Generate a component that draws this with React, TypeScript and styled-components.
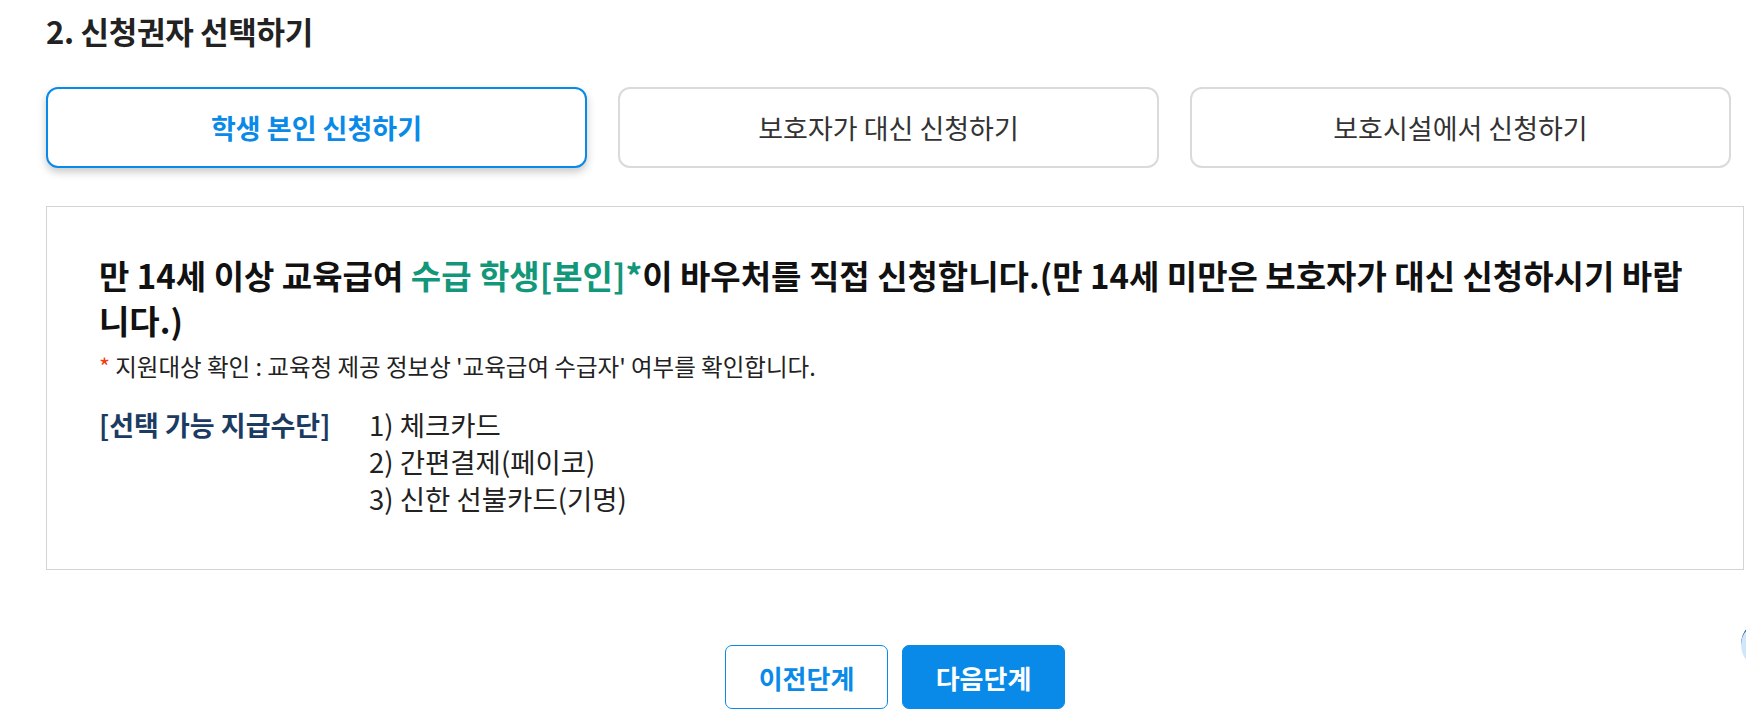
import React, { useState } from "react";
import styled, { createGlobalStyle } from "styled-components";

const GlobalStyle = createGlobalStyle`
  body {
    margin: 0;
    background: #fff;
    font-family: "Noto Sans CJK KR", "Noto Sans", sans-serif;
    overflow: hidden;
  }
`;

const Page = styled.div`
  width: 1698px;
  padding: 12px 0 0 46px;
`;

const Title = styled.h2`
  margin: 0;
  font-size: 31px;
  line-height: 38px;
  font-weight: 700;
  color: #222;
  letter-spacing: -0.3px;
`;

const ChoiceRow = styled.div`
  display: grid;
  grid-template-columns: repeat(3, 541px);
  column-gap: 31px;
  margin-top: 37px;
`;

const ChoiceButton = styled.button<{ $active?: boolean }>`
  height: 81px;
  border-radius: 12px;
  background: #fff;
  font-family: inherit;
  font-size: 27px;
  cursor: pointer;
  border: 2px solid ${({ $active }) => ($active ? "#0a8ae8" : "#dadada")};
  color: ${({ $active }) => ($active ? "#0a8ae8" : "#333")};
  font-weight: ${({ $active }) => ($active ? 700 : 400)};
  box-shadow: ${({ $active }) =>
    $active ? "0 4px 8px rgba(0, 0, 0, 0.22)" : "none"};
`;

const InfoBox = styled.div`
  margin-top: 38px;
  border: 1px solid #d3d3d3;
  padding: 46px 52px 52px;
`;

const Lead = styled.p`
  margin: 0;
  font-size: 33px;
  line-height: 45px;
  font-weight: 700;
  color: #111;
`;

const Green = styled.span`
  color: #13977a;
`;

const Note = styled.p`
  margin: 7px 0 0;
  font-size: 23.5px;
  line-height: 32px;
  color: #222;
`;

const Star = styled.span`
  color: #f23c0c;
`;

const PayRow = styled.div`
  display: flex;
  margin-top: 24px;
`;

const PayLabel = styled.div`
  width: 270px;
  font-size: 27px;
  line-height: 37px;
  font-weight: 700;
  color: #1c3b63;
`;

const PayList = styled.ul`
  margin: 0;
  padding: 0;
  list-style: none;
  font-size: 27.5px;
  line-height: 37px;
  color: #222;
`;

const ActionRow = styled.div`
  display: flex;
  justify-content: center;
  gap: 14px;
  margin-top: 75px;
`;

const ActionButton = styled.button<{ $primary?: boolean }>`
  width: 163px;
  height: 64px;
  border-radius: 7px;
  border: 1px solid #0a8ae8;
  background: ${({ $primary }) => ($primary ? "#0a8ae8" : "#fff")};
  color: ${({ $primary }) => ($primary ? "#fff" : "#0a8ae8")};
  font-family: inherit;
  font-size: 26px;
  font-weight: 700;
  cursor: pointer;
`;

const FloatBadge = styled.div`
  position: fixed;
  left: 1741px;
  top: 620px;
  width: 46px;
  height: 46px;
  border-radius: 50%;
  background: #cfe6fb;
  border-top: 3px solid #1d4f9a;
`;

const choices = ["학생 본인 신청하기", "보호자가 대신 신청하기", "보호시설에서 신청하기"];
const payments = ["1) 체크카드", "2) 간편결제(페이코)", "3) 신한 선불카드(기명)"];

function App() {
  const [selected, setSelected] = useState(0);

  return (
    <>
      <GlobalStyle />
      <Page>
        <Title>2. 신청권자 선택하기</Title>
        <ChoiceRow>
          {choices.map((label, i) => (
            <ChoiceButton
              key={label}
              $active={selected === i}
              onClick={() => setSelected(i)}
            >
              {label}
            </ChoiceButton>
          ))}
        </ChoiceRow>
        <InfoBox>
          <Lead>
            만 14세 이상 교육급여 <Green>수급 학생[본인]*</Green>이 바우처를 직접
            신청합니다.(만 14세 미만은 보호자가 대신 신청하시기 바랍니다.)
          </Lead>
          <Note>
            <Star>*</Star> 지원대상 확인 : 교육청 제공 정보상 '교육급여 수급자'
            여부를 확인합니다.
          </Note>
          <PayRow>
            <PayLabel>[선택 가능 지급수단]</PayLabel>
            <PayList>
              {payments.map((p) => (
                <li key={p}>{p}</li>
              ))}
            </PayList>
          </PayRow>
        </InfoBox>
        <ActionRow>
          <ActionButton>이전단계</ActionButton>
          <ActionButton $primary>다음단계</ActionButton>
        </ActionRow>
      </Page>
      <FloatBadge />
    </>
  );
}

export default App;
